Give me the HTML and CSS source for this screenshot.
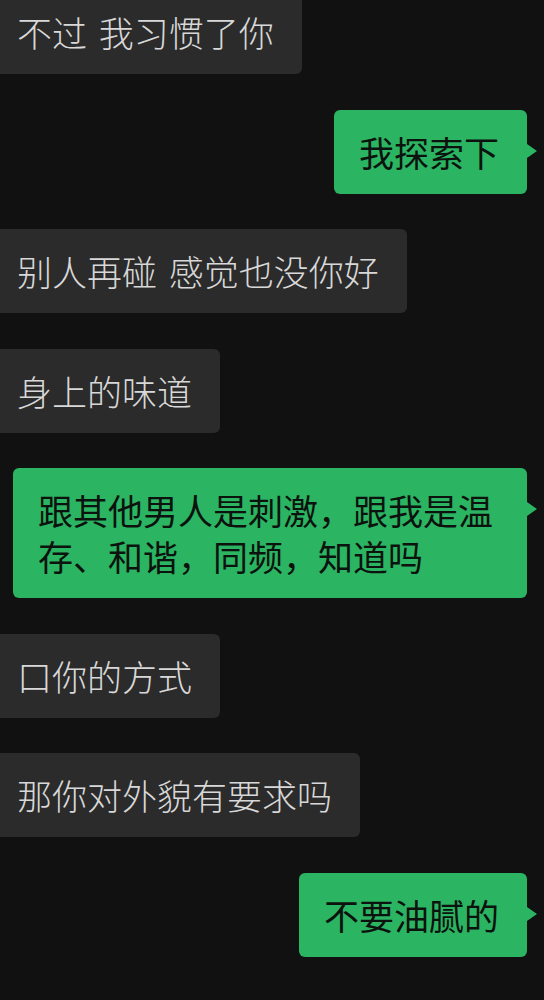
FILE: index.html
```html
<!DOCTYPE html>
<html lang="zh-CN">
<head>
    <meta charset="UTF-8">
    <meta name="viewport" content="width=device-width, initial-scale=1.0">
    <title>聊天</title>
    <link rel="stylesheet" href="styles.css">
</head>
<body>
    <div class="chat">
        <div class="row left"><div class="bubble">不过 我习惯了你</div></div>
        <div class="row right"><div class="bubble">我探索下</div></div>
        <div class="row left"><div class="bubble">别人再碰 感觉也没你好</div></div>
        <div class="row left"><div class="bubble">身上的味道</div></div>
        <div class="row right"><div class="bubble">跟其他男人是刺激，跟我是温存、和谐，同频，知道吗</div></div>
        <div class="row left"><div class="bubble">口你的方式</div></div>
        <div class="row left"><div class="bubble">那你对外貌有要求吗</div></div>
        <div class="row right"><div class="bubble">不要油腻的</div></div>
    </div>
</body>
</html>
```

FILE: styles.css
```css
html, body {
    margin: 0;
    padding: 0;
    background-color: #111111;
}
body {
    font-family: "Noto Sans CJK SC", "Noto Sans", sans-serif;
    overflow: hidden;
    height: 1000px;
}
.chat {
    display: flex;
    flex-direction: column;
    gap: 35.5px;
    margin-top: -10px;
}
.row {
    display: flex;
}
.row.left {
    justify-content: flex-start;
}
.row.right {
    justify-content: flex-end;
    padding-right: 17px;
}
.bubble {
    position: relative;
    box-sizing: border-box;
    max-width: 514px;
    padding: 19px 28px 19px 25px;
    font-size: 35px;
    line-height: 46px;
    word-spacing: 4px;
    border-radius: 6px;
}
.left .bubble {
    margin-left: -8px;
    background-color: #2b2b2b;
    color: #d8d8d8;
    font-weight: 300;
}
.right .bubble {
    background-color: #2bb462;
    color: #0c120d;
}
.right .bubble::after {
    content: "";
    position: absolute;
    right: -10px;
    top: 34px;
    border-top: 7px solid transparent;
    border-bottom: 7px solid transparent;
    border-left: 10px solid #2bb462;
}
```
